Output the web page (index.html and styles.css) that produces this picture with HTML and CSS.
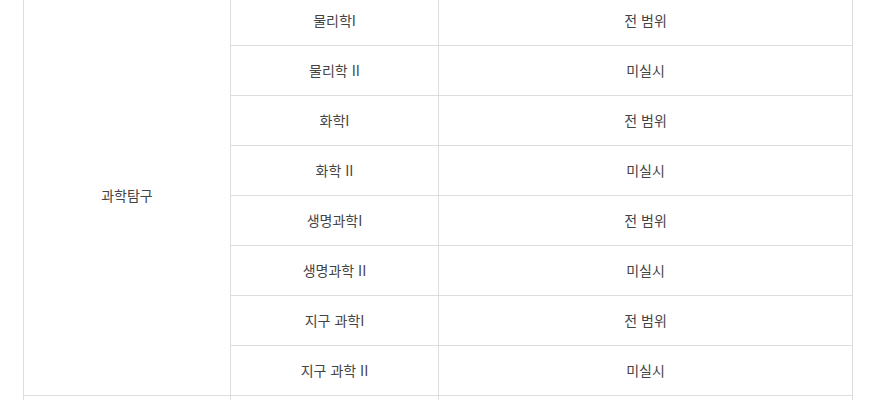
FILE: index.html
```html
<!DOCTYPE html>
<html lang="ko">
<head>
<meta charset="utf-8">
<link rel="stylesheet" href="styles.css">
</head>
<body>
<div class="wrap">
<table class="tbl">
<colgroup><col class="c1"><col class="c2"><col class="c3"></colgroup>
<tbody>
<tr><td rowspan="8">과학탐구</td><td>물리학I</td><td>전 범위</td></tr>
<tr><td>물리학 II</td><td>미실시</td></tr>
<tr><td>화학I</td><td>전 범위</td></tr>
<tr><td>화학 II</td><td>미실시</td></tr>
<tr><td>생명과학I</td><td>전 범위</td></tr>
<tr><td>생명과학 II</td><td>미실시</td></tr>
<tr><td>지구 과학I</td><td>전 범위</td></tr>
<tr><td>지구 과학 II</td><td>미실시</td></tr>
<tr><td></td><td></td><td></td></tr>
</tbody>
</table>
</div>
</body>
</html>
```
FILE: styles.css
```css
html, body { margin: 0; padding: 0; background: #fff; }
.wrap { padding: 0 20px 0 23px; overflow: hidden; }
.tbl {
  width: 829px;
  margin-top: -5px;
  border-collapse: collapse;
  table-layout: fixed;
  font-family: "Noto Sans CJK KR", "Noto Sans", sans-serif;
  font-size: 14px;
  color: #444;
}
.c1 { width: 207px; }
.c2 { width: 208px; }
.c3 { width: 414px; }
.tbl td {
  border: 1px solid #ddd;
  height: 47px;
  padding: 0 0 2px;
  text-align: center;
  vertical-align: middle;
  line-height: 20px;
}
```
